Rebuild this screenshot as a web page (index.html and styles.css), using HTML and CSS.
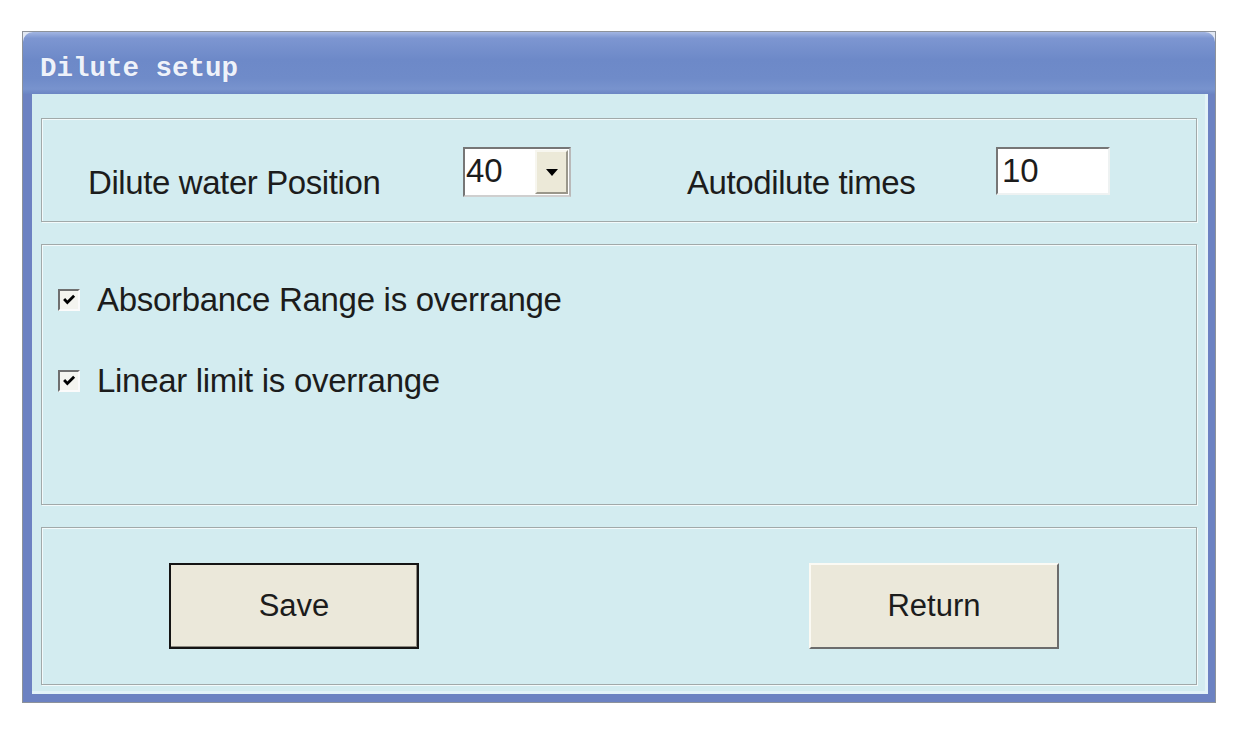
FILE: index.html
```html
<!DOCTYPE html>
<html lang="en">
<head>
  <meta charset="UTF-8" />
  <title>Dilute setup</title>
  <link rel="stylesheet" href="styles.css">
</head>
<body>
  <div class="window">
    <div class="titlebar">
      <span class="title">Dilute setup</span>
    </div>
    <div class="frame">
      <div class="client">
        <div class="group group-params">
          <label class="field-label label-pos" for="water-pos">Dilute water Position</label>
          <div class="combo" id="water-pos">
            <span class="combo-value">40</span>
            <span class="combo-btn"><span class="arrow"></span></span>
          </div>
          <label class="field-label label-times" for="times">Autodilute times</label>
          <input class="textbox" id="times" type="text" value="10" />
        </div>

        <div class="group group-checks">
          <label class="check-row">
            <span class="checkbox">
              <svg viewBox="0 0 12 12" width="14" height="14"><polyline points="1.8,5.2 4.6,8.2 10.4,2.4" /></svg>
            </span>
            Absorbance Range is overrange
          </label>
          <label class="check-row">
            <span class="checkbox">
              <svg viewBox="0 0 12 12" width="14" height="14"><polyline points="1.8,5.2 4.6,8.2 10.4,2.4" /></svg>
            </span>
            Linear limit is overrange
          </label>
        </div>

        <div class="group group-buttons">
          <button type="button" class="btn btn-default">Save</button>
          <button type="button" class="btn">Return</button>
        </div>
      </div>
    </div>
  </div>
</body>
</html>
```

FILE: styles.css
```css
body {
  margin: 0;
  background: #fff;
  font-family: "Liberation Sans", Arial, sans-serif;
  color: #1c1c1c;
}

.window {
  margin: 31px 0 0 22px;
  width: 1194px;
  height: 672px;
  box-sizing: border-box;
  border: 1px solid #8d929a;
  background: #e1e7f3;
  display: flex;
  flex-direction: column;
}

.titlebar {
  height: 62px;
  box-sizing: border-box;
  padding: 22px 0 0 17px;
  border-radius: 10px 10px 0 0;
  background: linear-gradient(to bottom, #a2b5e2 0%, #7d96d1 10%, #6d89c8 45%, #6f8bc9 75%, #7893ce 92%, #6b85c3 100%);
}

.title {
  font-family: "Liberation Mono", "Courier New", monospace;
  font-weight: bold;
  font-size: 27.5px;
  line-height: 30px;
  color: #eef2fa;
  text-shadow: 0 0 1px #5d77b5;
}

.frame {
  flex: 1;
  display: flex;
  background: #6c82c2;
  padding: 0 7px 8px 9px;
}

.client {
  flex: 1;
  display: flex;
  flex-direction: column;
  gap: 22px;
  background: #d3ecf0;
  border-right: 3px solid #e3f3f8;
  border-bottom: 3px solid #e3f3f8;
  padding: 24px 8px 6px 9px;
}

.group {
  box-sizing: border-box;
  border: 1px solid #a1a9a9;
  box-shadow: inset 1px 1px 0 #f3fafb, 1px 1px 0 #f3fafb;
}

/* top row */
.group-params {
  height: 104px;
  display: flex;
  align-items: flex-start;
  padding: 28px 0 0 46px;
}

.field-label {
  font-size: 33px;
  line-height: 38px;
  letter-spacing: -0.4px;
  margin-top: 17px;
}

.label-pos {
  width: 375px;
}

.label-times {
  width: 309px;
  margin-left: 116px;
}

.combo {
  width: 108px;
  height: 50px;
  box-sizing: border-box;
  display: flex;
  background: #fff;
  border: 2px solid;
  border-color: #767676 #b9b9b9 #cfcfcf #767676;
}

.combo-value {
  flex: 1;
  font-size: 33px;
  line-height: 44px;
  padding-left: 1px;
}

.combo-btn {
  width: 33px;
  margin: 1px 1px 1px 0;
  box-sizing: border-box;
  background: #ece9d8;
  border: 2px solid;
  border-color: #f7f6ef #9a978b #9a978b #f7f6ef;
  display: flex;
  align-items: center;
  justify-content: center;
}

.arrow {
  width: 0;
  height: 0;
  border-left: 6px solid transparent;
  border-right: 6px solid transparent;
  border-top: 7px solid #000;
}

.textbox {
  width: 114px;
  height: 48px;
  box-sizing: border-box;
  margin: 0;
  padding: 0 0 0 4px;
  font-family: "Liberation Sans", Arial, sans-serif;
  font-size: 33px;
  color: #1c1c1c;
  background: #fff;
  border: 2px solid;
  border-color: #767676 #eef2f2 #eef2f2 #767676;
  outline: none;
}

/* check boxes */
.group-checks {
  height: 261px;
  display: flex;
  flex-direction: column;
  gap: 43px;
  padding: 36px 0 0 16px;
}

.check-row {
  display: flex;
  align-items: center;
  font-size: 33px;
  line-height: 38px;
  letter-spacing: -0.3px;
}

.checkbox {
  width: 22px;
  height: 22px;
  box-sizing: border-box;
  margin-right: 17px;
  background: #f4f4ef;
  border: 2px solid;
  border-color: #6f6f6f #fbfbfb #fbfbfb #6f6f6f;
  display: flex;
  align-items: center;
  justify-content: center;
}

.checkbox polyline {
  fill: none;
  stroke: #000;
  stroke-width: 2.4;
}

/* buttons */
.group-buttons {
  height: 158px;
  display: flex;
  align-items: center;
  gap: 390px;
  padding-left: 127px;
}

.btn {
  width: 250px;
  height: 86px;
  font-family: "Liberation Sans", Arial, sans-serif;
  font-size: 31px;
  color: #1c1c1c;
  background: #ebe8da;
  border: 2px solid;
  border-color: #fbfaf4 #6c6c6c #6c6c6c #fbfaf4;
  padding: 0;
}

.btn-default {
  border: 2px solid #141414;
  box-shadow: inset -1px -1px 0 #8d8a80;
}
```
